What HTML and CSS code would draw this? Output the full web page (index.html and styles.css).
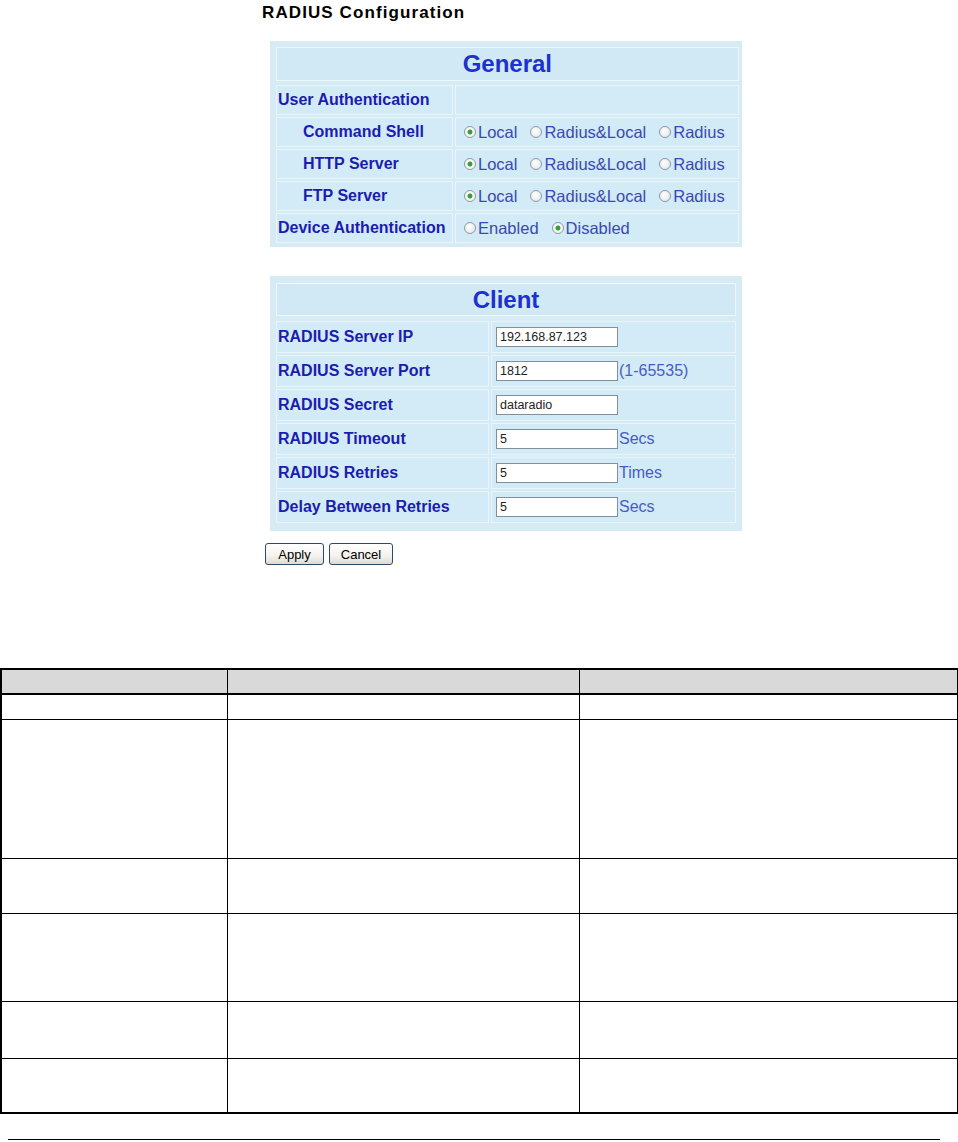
FILE: index.html
```html
<!DOCTYPE html>
<html lang="en">
<head>
    <meta charset="UTF-8">
    <title>RADIUS Configuration</title>
    <link rel="stylesheet" href="styles.css">
</head>
<body>
    <div class="config">
        <h1 class="title">RADIUS Configuration</h1>

        <section class="panel general">
            <div class="panel-head">General</div>
            <div class="cell label">User Authentication</div>
            <div class="cell"></div>
            <div class="cell label sub">Command Shell</div>
            <div class="cell options">
                <span class="radio on">Local</span>
                <span class="radio">Radius&amp;Local</span>
                <span class="radio">Radius</span>
            </div>
            <div class="cell label sub">HTTP Server</div>
            <div class="cell options">
                <span class="radio on">Local</span>
                <span class="radio">Radius&amp;Local</span>
                <span class="radio">Radius</span>
            </div>
            <div class="cell label sub">FTP Server</div>
            <div class="cell options">
                <span class="radio on">Local</span>
                <span class="radio">Radius&amp;Local</span>
                <span class="radio">Radius</span>
            </div>
            <div class="cell label">Device Authentication</div>
            <div class="cell options">
                <span class="radio">Enabled</span>
                <span class="radio on">Disabled</span>
            </div>
        </section>

        <section class="panel client">
            <div class="panel-head">Client</div>
            <div class="cell label">RADIUS Server IP</div>
            <div class="cell field"><input type="text" value="192.168.87.123"></div>
            <div class="cell label">RADIUS Server Port</div>
            <div class="cell field"><input type="text" value="1812"><span class="unit">(1-65535)</span></div>
            <div class="cell label">RADIUS Secret</div>
            <div class="cell field"><input type="text" value="dataradio"></div>
            <div class="cell label">RADIUS Timeout</div>
            <div class="cell field"><input type="text" value="5"><span class="unit">Secs</span></div>
            <div class="cell label">RADIUS Retries</div>
            <div class="cell field"><input type="text" value="5"><span class="unit">Times</span></div>
            <div class="cell label">Delay Between Retries</div>
            <div class="cell field"><input type="text" value="5"><span class="unit">Secs</span></div>
        </section>

        <div class="actions">
            <button class="btn apply">Apply</button>
            <button class="btn cancel">Cancel</button>
        </div>
    </div>

    <table class="params">
        <colgroup>
            <col class="c1">
            <col class="c2">
            <col class="c3">
        </colgroup>
        <tr class="head"><th></th><th></th><th></th></tr>
        <tr class="r1"><td></td><td></td><td></td></tr>
        <tr class="r2"><td></td><td></td><td></td></tr>
        <tr class="r3"><td></td><td></td><td></td></tr>
        <tr class="r4"><td></td><td></td><td></td></tr>
        <tr class="r5"><td></td><td></td><td></td></tr>
        <tr class="r6"><td></td><td></td><td></td></tr>
    </table>

    <hr class="rule">
</body>
</html>
```

FILE: styles.css
```css
body {
    margin: 0;
    font-family: 'Liberation Sans', Arial, sans-serif;
    background: #ffffff;
}

.config {
    margin-left: 262px;
    padding-top: 3px;
}

.title {
    margin: 0;
    font-size: 17px;
    line-height: 20px;
    letter-spacing: 1.1px;
    font-weight: bold;
    color: #000;
}

/* light blue config panels */
.panel {
    display: grid;
    width: 472px;
    box-sizing: border-box;
    margin-left: 8px;
    background: #d6ebf4;
    gap: 2px;
}

.general {
    margin-top: 18px;
    padding: 6px 6px 4px 6px;
    grid-template-columns: 177px 1fr;
    grid-template-rows: 36px;
    grid-auto-rows: 30px;
}

.client {
    margin-top: 29px;
    padding: 7px 6px 8px 6px;
    grid-template-columns: 213px 1fr;
    grid-template-rows: 36px;
    grid-auto-rows: 32px;
}

.panel-head {
    grid-column: 1 / span 2;
    display: flex;
    align-items: center;
    justify-content: center;
    background: #d0e9f5;
    border: 1px solid #ebf7fc;
    font-size: 24px;
    font-weight: bold;
    color: #1d30d0;
}

.general .panel-head {
    margin-bottom: 2px;
}

.client .panel-head {
    margin-bottom: 3px;
}

.cell {
    display: flex;
    align-items: center;
    background: #d2ebf6;
    border: 1px solid #e8f5fb;
}

.label {
    padding-left: 1px;
    font-size: 16px;
    font-weight: bold;
    color: #1c1cb0;
    white-space: nowrap;
}

.label.sub {
    padding-left: 26px;
}

.options {
    padding-left: 8px;
}

.radio {
    display: inline-flex;
    align-items: center;
    margin-right: 13px;
    font-size: 16.5px;
    color: #3a48b4;
}

.radio::before {
    content: "";
    width: 10px;
    height: 10px;
    margin-right: 2px;
    border: 1px solid #8e9aa4;
    border-radius: 50%;
    background: radial-gradient(circle at 40% 40%, #ffffff, #dde2e1);
}

.radio.on::before {
    background: radial-gradient(circle, #2e9a35 0, #3aa640 2.2px, #f4f6f3 2.8px);
}

.field {
    padding-left: 4px;
}

.field input {
    width: 122px;
    height: 20px;
    box-sizing: border-box;
    margin: 0;
    padding: 0 3px;
    border: 1px solid #7f8f9c;
    background: #ffffff;
    font-family: 'Liberation Sans', Arial, sans-serif;
    font-size: 12.5px;
    color: #222;
}

.unit {
    margin-left: 1px;
    font-size: 16px;
    color: #4a5cc2;
}

.actions {
    display: flex;
    gap: 5px;
    margin: 12px 0 0 3px;
}

.btn {
    height: 22px;
    padding: 0;
    border: 1px solid #2d4a6e;
    border-radius: 3px;
    background: linear-gradient(#ffffff, #f3f2ec 60%, #dedbd0);
    font-family: 'Liberation Sans', Arial, sans-serif;
    font-size: 13px;
    color: #000;
}

.apply {
    width: 59px;
}

.cancel {
    width: 64px;
}

/* parameter table below the screenshot */
.params {
    margin-top: 103px;
    width: 957px;
    border-collapse: collapse;
    border: 2px solid #000;
    table-layout: fixed;
}

.params .c1 { width: 226px; }
.params .c2 { width: 352px; }
.params .c3 { width: 379px; }

.params th,
.params td {
    border: 1px solid #000;
    padding: 0;
}

.params .head th {
    height: 23px;
    background: #d9d9d9;
    border-bottom-width: 2px;
}

.params .r1 td { height: 24px; }
.params .r2 td { height: 138px; }
.params .r3 td { height: 54px; }
.params .r4 td { height: 87px; }
.params .r5 td { height: 56px; }
.params .r6 td { height: 53px; }

.rule {
    margin: 25px 0 0 8px;
    width: 932px;
    height: 0;
    border: 0;
    border-top: 1px solid #000;
}
```
